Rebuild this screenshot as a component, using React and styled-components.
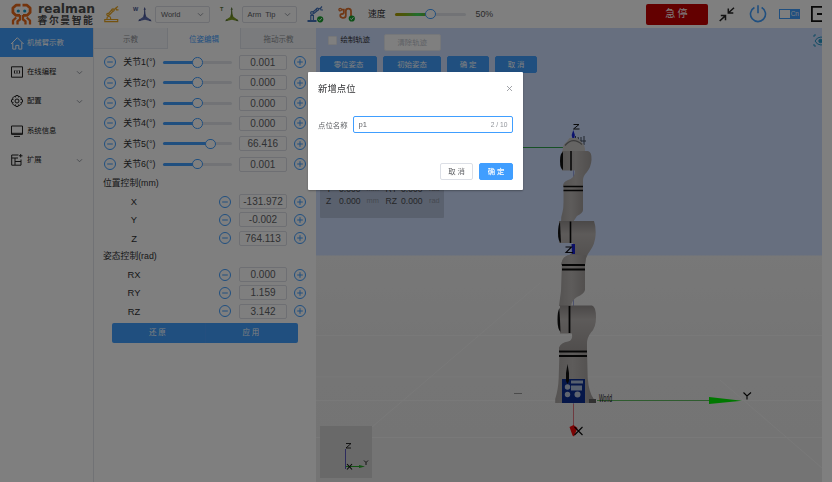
import React from "react";
import styled, { createGlobalStyle } from "styled-components";

const Global = createGlobalStyle`
  * { box-sizing: border-box; }
  html, body { margin: 0; padding: 0; overflow: hidden; background: #fff; }
  body { font-family: "Liberation Sans", "Noto Sans CJK SC", sans-serif; color: #303133; }
  button, input { font-family: inherit; margin: 0; }
`;

const BLUE = "#409eff";

const Page = styled.div`
  width: 832px; height: 482px; display: flex; flex-direction: column; overflow: hidden;
`;

/* ---------- header ---------- */
const Header = styled.header`
  flex: none; width: 822px; height: 28px; display: flex; align-items: center; overflow: hidden; background: #fff;
`;
const Brand = styled.div`
  flex: none; width: 104px; height: 28px; padding: 3px 0 0 11px; display: flex; gap: 5.5px;
`;
const BrandWords = styled.div`display: flex; flex-direction: column; color: #4c4c4c;`;
const BrandName = styled.span`
  font: bold 13px/11px "DejaVu Sans", sans-serif; height: 11px; letter-spacing: 0;
  transform: scaleX(0.95); transform-origin: left; white-space: nowrap;
`;
const BrandCn = styled.span`
  font: bold 9.8px/11px "Noto Sans CJK SC", sans-serif; letter-spacing: 1.6px; white-space: nowrap; margin-top: 0.5px;
`;
const Glyph = styled.svg`
  flex: none; display: block; overflow: visible; width: ${p => p.$w}px; height: ${p => p.$h}px;
  margin-left: ${p => p.$ml || 0}px;
`;
const SelectBox = styled.div`
  flex: none; width: 55px; height: 17px; margin-left: ${p => p.$ml}px; padding: 0 6px 0 5px;
  border: 1px solid #dcdfe6; border-radius: 2px; display: flex; align-items: center; justify-content: space-between;
  font-size: 7.5px; color: #606266; white-space: pre;
`;
const SpeedLabel = styled.span`flex: none; margin-left: 12px; width: 27px; font-size: 8.8px; line-height: 13px; color: #303133;`;
const SpeedValue = styled.span`flex: none; margin-left: 9.5px; width: 170px; font-size: 8.8px; color: #555;`;
const Stop = styled.button`
  flex: none; width: 62px; height: 21px; padding: 0 0 1px; border: 0; border-radius: 2px; background: #c60000; color: #fff;
  font-size: 10px; line-height: 19px; letter-spacing: 2.2px; text-indent: 2px;
`;
const Lang = styled.div`
  flex: none; width: 21px; height: 10px; margin-left: 12px; background: ${BLUE}; display: flex; align-items: center;
  color: #f2f8ff; font-size: 6.4px; line-height: 10px; letter-spacing: 0;
  &::before { content: ""; flex: none; width: 9.5px; height: 8px; margin: 0 1.2px 0 1px; background: #fff; }
`;

/* ---------- slider ---------- */
const Track = styled.div`
  flex: none; width: ${p => p.$w}px; height: 3px; border-radius: 2px; background: #e4e7ed; display: flex; align-items: center;
`;
const Fill = styled.div`
  flex: none; width: ${p => p.$fill}px; height: 3px; border-radius: 2px 0 0 2px;
  background: ${p => (p.$rainbow ? "linear-gradient(90deg,#b39d00 0%,#8bb31c 30%,#3fdc5c 65%,#55c245 80%,#b39a00 100%)" : BLUE)};
`;
const Thumb = styled.div`
  flex: none; width: 10.5px; height: 10.5px; margin-left: -5px; border: 1px solid ${BLUE}; border-radius: 50%; background: #fff;
`;
const Slider = ({ w, fill, rainbow }) => (
  <Track $w={w}><Fill $fill={fill} $rainbow={rainbow} /><Thumb /></Track>
);

/* ---------- body ---------- */
const Body = styled.div`flex: 1; display: flex; min-height: 0;`;
const Nav = styled.nav`flex: none; width: 94px; border-right: 1px solid #e2e4ea; display: flex; flex-direction: column;`;
const NavItem = styled.div`
  flex: none; height: 29.3px; padding: 0.5px 11px 0 11px; display: flex; align-items: center; gap: 4px;
  background: ${p => (p.$on ? BLUE : "transparent")}; color: ${p => (p.$on ? "#fff" : "#222")};
  font-size: 7.35px; line-height: 12px;
  & > span { flex: 1; white-space: nowrap; }
`;
const Panel = styled.section`flex: none; width: 222px; display: flex; flex-direction: column;`;
const Tabs = styled.div`flex: none; width: 222px; height: 21px; display: flex;`;
const Tab = styled.div`
  width: ${p => p.$w || 73}px; display: flex; align-items: center; justify-content: center; font-size: 7.5px;
  color: ${p => (p.$on ? BLUE : "#909399")}; background: ${p => (p.$on ? "#fff" : "#f5f7fa")};
  border: solid #e0e4ec; border-width: ${p => (p.$on ? "0 1px" : "0 0 1px")};
`;
const Joints = styled.div`display: flex; flex-direction: column; padding-top: 3.1px;`;
const JointRow = styled.div`height: 20.4px; display: flex; align-items: center; padding-left: 9.5px;`;
const JointLabel = styled.span`flex: none; width: 39.5px; margin-left: 7.8px; font-size: 8.9px; line-height: 12px; white-space: nowrap;`;
const PoseRow = styled.div`height: 18.25px; display: flex; align-items: center; padding-left: 20px;`;
const PoseLabel = styled.span`flex: none; width: 40px; margin-right: 65px; text-align: center; font-size: 9.4px;`;
const GroupTitle = styled.div`
  height: ${p => p.$h}px; padding-left: 9px; display: flex; align-items: center; font-size: 8.8px; line-height: 12px;
`;
const NumberBox = styled.div`
  flex: none; width: 48px; height: ${p => p.$h || 15}px; margin: 0 7px 0 ${p => p.$ml}px; border: 1px solid #dcdfe6; border-radius: 2px;
  display: flex; align-items: center; justify-content: center; font-size: 10px; color: #606266;
`;
const Apply = styled.div`
  display: flex; width: 186px; height: 20px; margin: 2.8px 0 0 18px; border-radius: 2px; overflow: hidden; background: ${BLUE};
`;
const ApplyHalf = styled.button`
  flex: 1; padding: 0; border: 0; background: transparent; color: #fff; font-size: 7.5px; letter-spacing: 1.7px; line-height: 12px;
  & + & { border-left: 1px solid #489fff; }
`;

/* ---------- scene ---------- */
const Scene = styled.main`
  position: relative; flex: none; width: 506px; overflow: hidden;
`;
const Canvas = styled.svg`position: absolute; inset: 0; width: 506px; height: 454px; display: block;`;
const SceneTools = styled.div`
  position: relative; padding: 6px 0 0 4px; display: flex; flex-direction: column; gap: 6px;
`;
const ToolRow = styled.div`display: flex; align-items: center; gap: 6px; height: ${p => p.$h}px;`;
const Check = styled.label`
  width: 57.5px; padding-left: 8px; display: flex; align-items: center; gap: 3.5px; font-size: 7.4px; line-height: 12px; white-space: nowrap;
  margin-top: -4px;
  &::before { content: ""; width: 7px; height: 7px; background: #fff; border-radius: 1px; border: 1px solid #eceef2; }
`;
const ToolButton = styled.button`
  flex: none; width: ${p => p.$w}px; height: 17px; padding: 0; border-radius: 2px; font-size: 7.4px; line-height: 15px;
  letter-spacing: ${p => (p.$wide ? 1.9 : 0)}px; text-indent: ${p => (p.$wide ? 1.9 : 0)}px;
  border: 1px solid ${p => (p.$off ? "#ebeef5" : BLUE)};
  background: ${p => (p.$off ? "#fff" : BLUE)}; color: ${p => (p.$off ? "#c0c4cc" : "#fff")};
`;
const Readout = styled.div`
  width: 124px; height: 60px; margin-top: 79px; padding: 12px 0 0 6px; background: #b5c3dd; border-radius: 1px;
  display: grid; grid-template-columns: 13px 27.5px 19px 15.5px 28px 14px; grid-auto-rows: 12.4px; align-items: center;
  font-size: 8.6px; color: #4a4c50; white-space: nowrap;
  i { font-style: normal; font-size: 7.4px; color: #8b93a3; }
`;

/* ---------- dialog ---------- */
const Mask = styled.div`
  position: fixed; inset: 0; background: rgba(0, 0, 0, 0.5); padding: 72px 0 0 308px;
`;
const Dialog = styled.div`
  width: 215px; height: 118px; padding: 10px; background: #fff; border-radius: 1px; display: flex; flex-direction: column;
  box-shadow: 0 1px 2px rgba(0, 0, 0, 0.3);
`;
const DialogHead = styled.div`
  display: flex; justify-content: space-between; align-items: center; height: 13px; padding-right: 1.5px; font-size: 9.4px; line-height: 13px;
`;
const Field = styled.div`
  margin-top: 21px; height: 17px; display: flex; align-items: center; font-size: 7.4px; color: #606266;
  & > span { flex: none; width: 35px; white-space: nowrap; }
`;
const TextBox = styled.div`
  flex: 1; height: 17px; border: 1px solid ${BLUE}; border-radius: 2px; padding: 0 4.5px; display: flex; align-items: center;
  justify-content: space-between; font-size: 7.6px; color: #606266;
`;
const Count = styled.span`font-size: 6.7px; color: #909399;`;
const Actions = styled.div`margin-top: auto; display: flex; justify-content: flex-end; gap: 6px;`;
const ActionButton = styled.button`
  width: ${p => (p.$primary ? 34 : 33)}px; height: 17px; padding: 0; border-radius: 2px; font-size: 7.4px; line-height: 15px;
  letter-spacing: 1.8px; text-indent: 1.8px; border: 1px solid ${p => (p.$primary ? BLUE : "#dcdfe6")};
  background: ${p => (p.$primary ? BLUE : "#fff")}; color: ${p => (p.$primary ? "#fff" : "#606266")};
  font-weight: ${p => (p.$primary ? 500 : 400)};
`;

/* ---------- icons ---------- */
const Down = () => (
  <Glyph $w={5} $h={5} viewBox="0 0 10 10" fill="none" stroke="#858a93" strokeWidth="1.7"><path d="M0 2.5l5 5 5-5" /></Glyph>
);
const Round = ({ plus }) => (
  <Glyph $w={12} $h={12} viewBox="0 0 12 12" fill="none" stroke={BLUE} strokeWidth="1">
    <circle cx="6" cy="6" r="5.5" /><path d={plus ? "M3.2 6h5.6M6 3.2v5.6" : "M3.2 6h5.6"} />
  </Glyph>
);
const LogoMark = () => (
  <Glyph $w={21} $h={22} viewBox="0 0 21 22" fill="none" stroke="#e9691b" strokeWidth="2.8" strokeLinejoin="round">
    <path d="M9.500 2.200H5L1.900 5V9.500L5 12.400h4M11.500 2.200H16L19.100 5v4.500L16 12.400h-4" />
    <path d="M9 12v4.500l-2.500 1.800v3.200M12 12v4.500l2.500 1.800v3.200M5.200 14.500L2 17.500v4M15.800 14.500l3.200 3v4" strokeWidth="2.300" />
    <circle cx="7.300" cy="8" r="1.600" fill="#159ac9" stroke="none" /><circle cx="13.700" cy="8" r="1.600" fill="#159ac9" stroke="none" />
  </Glyph>
);
const ArmIcon = () => (
  <Glyph $w={15} $h={17} viewBox="0 0 15 17" fill="none" stroke="#e9a51f" strokeWidth="1.200">
    <path d="M.8 13.500h12.900v2.200H.8zM3 13.500v-1.500q0-1.500 1.800-1.500t1.800 1.500v1.500" />
    <circle cx="4" cy="8.500" r="1.200" /><path d="M4.600 7.300L8 3.600M5.300 9L8.800 5.300" />
    <circle cx="9" cy="4" r="1.200" /><path d="M10.200 3.500l2-1.500M14 .5l-2 1.300.5 2h2" />
  </Glyph>
);
const Frame = ({ letter, color, dark, ml }) => (
  <Glyph $w={18} $h={17} $ml={ml} viewBox="0 0 18 17">
    <path d="M10.700 1.500l.7 6.300 1 3 4.600 3.200-1 1-5-1.300-5.500 1.300-1-1 4.500-3 1-3.200z" fill={color} />
    <path d="M10.700 1l1.100 2.800H9.600zM4.200 15.300l1.300-2 1.500 1.400zM17.800 15.200l-2.800-.3.900-1.600z" fill={dark} />
    <path d="M10.700 3v8.500" stroke={dark} strokeWidth=".8" />
    <text x="-1" y="4.500" fontSize="5.500" fontWeight="bold" fill={dark}>{letter}</text>
  </Glyph>
);
const Badge = ({ x, y }) => (
  <g><circle cx={x} cy={y} r="3.100" fill="#16a02c" stroke="none" /><path d={`M${x - 1.6} ${y}l1.200 1.200 2-2.400`} stroke="#fff" strokeWidth=".9" fill="none" /></g>
);
const ArmOk = () => (
  <Glyph $w={16} $h={17} $ml={11} viewBox="0 0 16 17" fill="none" stroke="#4575bd" strokeWidth="1.200">
    <path d="M-.5 15h9" strokeWidth="2" />
    <path d="M2.800 14V9.500h2.600V14" />
    <circle cx="4" cy="7" r="1.400" /><path d="M5 6l3.500-3M5.500 7.800L9.500 4.500" />
    <circle cx="9.500" cy="3.300" r="1.100" /><path d="M10.700 3l2-1 1.300-1.500M12.500 2.300l.5 1.700h2" /><Badge x={12.200} y={13.300} />
  </Glyph>
);
const TrackOk = () => (
  <Glyph $w={18} $h={15} $ml={14.500} viewBox="0 0 18 15" fill="none" stroke="#e0732f" strokeWidth="1.800">
    <circle cx="2.200" cy="2.600" r="1.300" strokeWidth="1.300" />
    <path d="M3.500 2.600H5.800V5.500Q5.800 7 4 7T2.300 8.800 4.500 10.800H5.500Q7.800 10.800 7.800 8.500V4Q7.800 1.600 10.300 1.600T13 4V9" /><Badge x={13.800} y={11.500} />
  </Glyph>
);
const Shrink = () => (
  <Glyph $w={16} $h={15} $ml={11.500} viewBox="0 0 16 15" fill="none" stroke="#262626" strokeWidth="1.500">
    <path d="M15 .8L9.300 6M9.300 1.500V6h5M.7 14L6.500 8.600M1.800 8.600h4.700v4.700" />
  </Glyph>
);
const Power = () => (
  <Glyph $w={18} $h={18} $ml={14} viewBox="0 0 18 18" fill="none" stroke={BLUE} strokeWidth="1.600">
    <path d="M9 .3v8M5.400 2.500a7.500 7.500 0 1 0 7.200 0" />
  </Glyph>
);
const Exit = () => (
  <Glyph $w={16} $h={16} $ml={10.500} viewBox="0 0 16 16" fill="none" stroke="#111" strokeWidth="1.800">
    <path d="M15 .9H.9v14.200H15M6 8h10" />
  </Glyph>
);
const NAV_PATHS = {
  home: "M0 7L6.300 .7 12.600 7M1.800 5.500v6.600h3V8.400h3v3.700h3V5.500",
  code: "M.5 .8h11v10.400H.5zM4 4.200Q2.500 6 4 7.800M8 4.200Q9.500 6 8 7.800M6 4.300v3.400",
  screen: "M.5 1h11v8.400H.5zM3 11.400h6M.5 8.300h11",
  grid: "M7.500 1H.7v10.200H10V5.500M.7 4H7M4 4v7M4 7.500h6M9.700 0v3.500M8 1.800h3.500",
};
const NavIcon = ({ kind }) => (
  <Glyph $w={12} $h={12} viewBox="0 0 12 12" fill="none" stroke="currentColor" strokeWidth="1">
    {kind === "gear" ? (
      <>
        <path d="M4.900.5h2.200l.4 1.600 1.300-.7 1.700 1.700-.7 1.300 1.700.4v2.300l-1.700.4.7 1.300-1.700 1.700-1.300-.7-.4 1.700H4.900l-.4-1.700-1.300.7-1.700-1.700.7-1.300L.5 7.100V4.800l1.700-.4-.7-1.300 1.700-1.700 1.300.7z" />
        <circle cx="6" cy="6" r="2" />
      </>
    ) : <path d={NAV_PATHS[kind]} />}
  </Glyph>
);

const RobotView = () => (
  <Canvas viewBox="316 28 506 454">
    <defs>
      <linearGradient id="ground" x1="0" y1="0" x2="0" y2="1"><stop offset="0" stopColor="#f0f0f0" /><stop offset=".35" stopColor="#ebebeb" /><stop offset="1" stopColor="#e8e8e8" /></linearGradient>
      <linearGradient id="metal" x1="0" y1="0" x2="1" y2="0"><stop offset="0" stopColor="#aaa6a4" /><stop offset=".45" stopColor="#bcb8b6" /><stop offset="1" stopColor="#a29d9b" /></linearGradient>
      <linearGradient id="joint" x1="0" y1="0" x2="0" y2="1"><stop offset="0" stopColor="#969190" /><stop offset=".3" stopColor="#bbb6b4" /><stop offset="1" stopColor="#a09b99" /></linearGradient>
    </defs>
    <path fill="#cfdfff" d="M316 28h506v228H316z" />
    <path fill="url(#ground)" d="M316 255.500h506V482H316z" />
    <g stroke="#f4f4f4" strokeWidth=".8" fill="none">
      <path d="M316 335.500h506M316 377h506M316 400.500h506M316 437.500h506M372 427L427 380 540 283M720 380l102 88" />
    </g>
    <path d="M514 393.500h8" stroke="#8d8d8d" strokeWidth=".9" />
    <path d="M500 147.500h66" stroke="#2da14a" strokeWidth="1" />
    <path d="M573.500 165v240" stroke="#8490d8" strokeWidth=".8" />
    {/* wrist */}
    <path d="M573.300 130l1.600 5-.8 4h-1.600l-.8-4z" fill="#1826dc" />
    <path d="M573.500 124.500h5.500l-5.500 4.500h6" stroke="#161616" strokeWidth="1" fill="none" />
    <path d="M575.500 136v5M578 137l1 4M581 137v5M584 136v9M580 141h6" stroke="#3e4856" strokeWidth="1" />
    <path d="M562.500 152q0-8 4-10l3-4h8l4 4q4 3 3.500 10z" fill="#cac8c7" />
    <path d="M565 145.500q8-9 17-1" stroke="#777" strokeWidth="1.200" fill="none" />
    <path d="M562 151h26q4 1 3.500 9-.5 7-4.500 12-4 4-4 8v7h-20q-.5-5 5-7 7-2 7-9.500h-13z" fill="url(#metal)" />
    <path d="M563 152q-3 1-3 9t3 9z" fill="#111" />
    <path d="M571 151v19.500" stroke="#080808" strokeWidth="1.500" />
    {/* forearm */}
    <path d="M563.500 186h19.500v24q0 3-6 6l-4 6h-12q0-6 1.500-10 1-4 1-10z" fill="url(#metal)" />
    <path d="M563.500 186.500H583M563.500 190.500H583" stroke="#0c0c0c" strokeWidth="1.700" />
    <path d="M559 221h35q2 5 1.600 14-.6 9-5.600 16-5 6-5 14h-24q1-7 7-9 6-3 5-13h-14z" fill="url(#joint)" />
    <path d="M560 222q-2 3-2 11t3 10z" fill="#111" />
    <path d="M570.500 221.500V243" stroke="#080808" strokeWidth="1.600" />
    <path d="M571.500 244h3.500v10h-3z" fill="#1921cf" />
    <path d="M565.500 247h6l-5.500 5.500h7" stroke="#0c0c14" strokeWidth="1.100" fill="none" />
    {/* upper arm */}
    <path d="M562 261q1-4 6-6h18l-1 10v25q-1 4-8 7-5 3-6 9h-12q1-8 2-15z" fill="url(#metal)" />
    <path d="M562 265h23M562 269.500h23" stroke="#0c0c0c" strokeWidth="1.800" />
    <path d="M560 305.500h32q4 1 4 12 0 10-5 15-4 5-4 11v8h-28v-4q2-5 9-6 5-1 4-8h-12z" fill="url(#joint)" />
    <path d="M559.500 308q-2 3-2 12t3 12z" fill="#111" />
    <path d="M569.500 306v27" stroke="#080808" strokeWidth="1.800" />
    {/* base */}
    <path d="M559.500 350h27.500l.7 28q1 14 6 21v4h-38.500v-4q3-9 3.500-21z" fill="url(#metal)" />
    <path d="M559 351.500h28M559 356h28" stroke="#0c0c0c" strokeWidth="2" />
    <path d="M562 379h23v24h-23z" fill="#0d2f92" />
    <path d="M571 380.500h12v3h-12zM571 385.500h11v5h-11z" fill="#afc0dc" />
    <circle cx="567.500" cy="387" r="2.700" fill="#bfcadf" /><circle cx="567.500" cy="394.500" r="2.700" fill="#bfcadf" /><circle cx="577.500" cy="394.500" r="3" fill="#bfcadf" />
    <path d="M567.500 364l1.500 9v8l-1.500 3-1.500-3v-8z" fill="#111" />
    <path d="M589 399h7v4h-7z" fill="#626262" />
    <path d="M597 400.500h112" stroke="#39a839" strokeWidth=".8" />
    <path d="M709 397l33 3.700-33 3.300z" fill="#00f000" />
    <g transform="translate(599 402) scale(.5 1.120)"><text fontSize="10" fill="#161616">World</text></g>
    <path d="M743.500 392.500l3.500 3.500 4-3.500M747 396v3.500" stroke="#050505" strokeWidth="1.100" fill="none" />
    <path d="M573.500 404v23" stroke="#dc7580" strokeWidth="1" />
    <path d="M569.500 427l4-2 4 3-3.500 8.500-1.500-1z" fill="#f40808" />
    <path d="M574.500 427l8 8M582.500 427l-8 8" stroke="#080808" strokeWidth="1.100" />
    {/* orientation widget */}
    <path d="M320 426h52v52h-52z" fill="#d2d2d2" />
    <path d="M345.500 449v20" stroke="#5b57bb" /><path d="M346 466.500h16" stroke="#27a627" /><path d="M359 465l6 1.500-6 1.500z" fill="#27a627" />
    <path d="M347 464l5 5.500M352 464l-5 5.500" stroke="#101010" strokeWidth="1.100" />
    <path d="M346 443.500h5l-5 4.500h5M364 460.500l2 2 2-2M366 462.500v2.500" stroke="#161616" strokeWidth=".9" fill="none" />
    {/* camera toggle */}
    <g fill="none" stroke="#2598c9" strokeWidth="1"><path d="M814 37v-2h2M814 44v2h2M815 41q2-4 6-4t6 4q-2 4-6 4t-6-4" /><circle cx="820.500" cy="41" r="1.700" fill="#2598c9" /></g>
  </Canvas>
);

const NAV = [["机械臂示教", "home"], ["在线编程", "code", true], ["配置", "gear", true], ["系统信息", "screen"], ["扩展", "grid", true]];
const JOINTS = [["0.001", 34.5], ["0.000", 34.5], ["0.000", 34.5], ["0.000", 34.5], ["66.416", 47.5], ["0.001", 34.5]];
const Pose = ({ name, value }) => (
  <PoseRow><PoseLabel>{name}</PoseLabel><Round /><NumberBox $ml={8}>{value}</NumberBox><Round plus /></PoseRow>
);

export default function App() {
  return (
    <Page>
      <Global />
      <Header>
        <Brand>
          <LogoMark />
          <BrandWords><BrandName>realman</BrandName><BrandCn>睿尔曼智能</BrandCn></BrandWords>
        </Brand>
        <ArmIcon />
        <Frame letter="W" color="#5f6fb0" dark="#45528f" ml={15} />
        <SelectBox $ml={3}>World<Down /></SelectBox>
        <Frame letter="T" color="#7f9c25" dark="#58743a" ml={11} />
        <SelectBox $ml={2.5}>{"Arm  Tip"}<Down /></SelectBox>
        <ArmOk />
        <TrackOk />
        <SpeedLabel>速度</SpeedLabel>
        <Slider w={71} fill={35} rainbow />
        <SpeedValue>50%</SpeedValue>
        <Stop>急停</Stop>
        <Shrink />
        <Power />
        <Lang>Cn</Lang>
        <Exit />
      </Header>
      <Body>
        <Nav>
          {NAV.map(([text, icon, more], i) => (
            <NavItem key={text} $on={i === 0}><NavIcon kind={icon} /><span>{text}</span>{more && <Down />}</NavItem>
          ))}
        </Nav>
        <Panel>
          <Tabs><Tab>示教</Tab><Tab $on $w={74}>位姿编辑</Tab><Tab $w={75}>拖动示教</Tab></Tabs>
          <Joints>
            {JOINTS.map(([value, fill], i) => (
              <JointRow key={i}>
                <Round /><JointLabel>关节{i + 1}(°)</JointLabel>
                <Slider w={69} fill={fill} />
                <NumberBox $ml={7}>{value}</NumberBox><Round plus />
              </JointRow>
            ))}
          </Joints>
          <GroupTitle $h={18}>位置控制(mm)</GroupTitle>
          <Pose name="X" value="-131.972" /><Pose name="Y" value="-0.002" /><Pose name="Z" value="764.113" />
          <GroupTitle $h={18.25}>姿态控制(rad)</GroupTitle>
          <Pose name="RX" value="0.000" /><Pose name="RY" value="1.159" /><Pose name="RZ" value="3.142" />
          <Apply><ApplyHalf>还原</ApplyHalf><ApplyHalf>应用</ApplyHalf></Apply>
        </Panel>
        <Scene>
          <RobotView />
          <SceneTools>
            <ToolRow $h={16}><Check>绘制轨迹</Check><ToolButton $w={57.5} $off>清除轨迹</ToolButton></ToolRow>
            <ToolRow $h={17}>
              <ToolButton $w={57}>零位姿态</ToolButton><ToolButton $w={58}>初始姿态</ToolButton>
              <ToolButton $w={42} $wide>确定</ToolButton><ToolButton $w={42} $wide>取消</ToolButton>
            </ToolRow>
            <Readout>
              {["X", "Y", "Z"].map(a => (
                <React.Fragment key={a}>
                  <span>{a}</span><span>0.000</span><i>mm</i><span>R{a}</span><span>0.000</span><i>rad</i>
                </React.Fragment>
              ))}
            </Readout>
          </SceneTools>
        </Scene>
      </Body>
      <Mask>
        <Dialog>
          <DialogHead>
            <span>新增点位</span>
            <Glyph $w={5} $h={5} viewBox="0 0 5 5" stroke="#8b8e94" strokeWidth=".8"><path d="M0 0l5 5M5 0L0 5" /></Glyph>
          </DialogHead>
          <Field><span>点位名称</span><TextBox>p1<Count>2 / 10</Count></TextBox></Field>
          <Actions><ActionButton>取消</ActionButton><ActionButton $primary>确定</ActionButton></Actions>
        </Dialog>
      </Mask>
    </Page>
  );
}
